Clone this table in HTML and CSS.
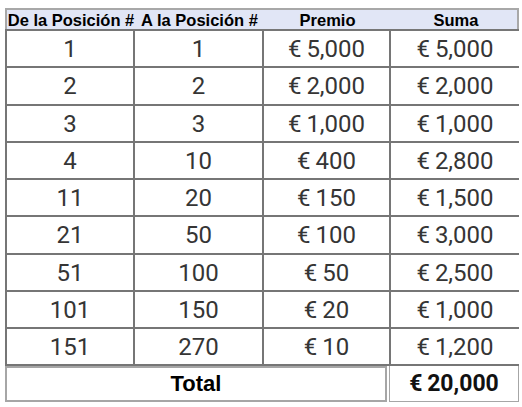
FILE: index.html
```html
<!DOCTYPE html>
<html lang="es">
<head>
<meta charset="utf-8">
<link rel="stylesheet" href="styles.css">
</head>
<body>
<div class="sheet">
  <div class="head">
    <div>De la Posición #</div>
    <div>A la Posición #</div>
    <div>Premio</div>
    <div>Suma</div>
  </div>
  <div class="grid">
    <div>1</div><div>1</div><div>€ 5,000</div><div>€ 5,000</div>
    <div>2</div><div>2</div><div>€ 2,000</div><div>€ 2,000</div>
    <div>3</div><div>3</div><div>€ 1,000</div><div>€ 1,000</div>
    <div>4</div><div>10</div><div>€ 400</div><div>€ 2,800</div>
    <div>11</div><div>20</div><div>€ 150</div><div>€ 1,500</div>
    <div>21</div><div>50</div><div>€ 100</div><div>€ 3,000</div>
    <div>51</div><div>100</div><div>€ 50</div><div>€ 2,500</div>
    <div>101</div><div>150</div><div>€ 20</div><div>€ 1,000</div>
    <div>151</div><div>270</div><div>€ 10</div><div>€ 1,200</div>
  </div>
  <div class="total">
    <div class="total-label">Total</div>
    <div class="total-value">€ 20,000</div>
  </div>
</div>
</body>
</html>
```

FILE: styles.css
```css
html, body {
  margin: 0;
  padding: 0;
  background: #ffffff;
}
body {
  width: 522px;
  height: 407px;
  overflow: hidden;
}
.sheet {
  margin: 8px 0 0 5px;
  width: 514px;
}
.head {
  display: grid;
  grid-template-columns: 128px 129px 127px 130px;
  height: 21px;
  background: #e1e6f6;
  border: 2px solid #a8a8a8;
  border-bottom: none;
  box-sizing: border-box;
  font-family: "Liberation Sans", Arial, sans-serif;
  font-weight: bold;
  font-size: 16.5px;
  color: #000;
  line-height: 20px;
}
.head div {
  text-align: center;
  white-space: nowrap;
}
.grid {
  display: grid;
  grid-template-columns: 126px 127px 125px 128px;
  grid-template-rows: 35px 36px 35px 35px 35px 36px 35px 35px 35px;
  gap: 2px;
  padding: 2px;
  background: #767676;
}
.grid div {
  background: #fff;
  display: flex;
  align-items: center;
  justify-content: center;
  font-family: Roboto, "Liberation Sans", sans-serif;
  font-size: 24px;
  word-spacing: -1px;
  color: #353535;
}
.total {
  display: flex;
  height: 36px;
}
.total-label {
  width: 382px;
  box-sizing: border-box;
  border: 2px solid #a6a6a6;
  display: flex;
  align-items: center;
  justify-content: center;
  font-family: "Liberation Sans", Arial, sans-serif;
  font-weight: bold;
  font-size: 22px;
  color: #000;
}
.total-value {
  margin-left: 2px;
  width: 130px;
  box-sizing: border-box;
  border: 1px solid #a6a6a6;
  border-top: none;
  display: flex;
  align-items: center;
  justify-content: center;
  font-family: Roboto, "Liberation Sans", sans-serif;
  font-weight: bold;
  font-size: 23px;
  word-spacing: -1px;
  color: #111;
}
```
